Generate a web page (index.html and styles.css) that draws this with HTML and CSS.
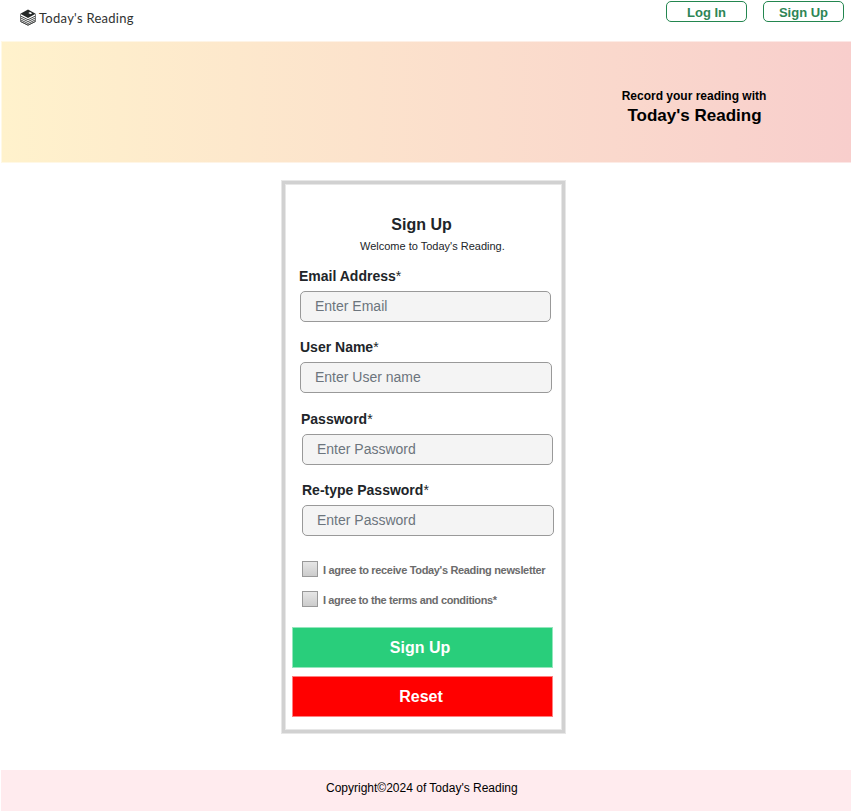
FILE: index.html
```html
<!DOCTYPE html>
<html lang="en">
<head>
<meta charset="utf-8">
<title>Today's Reading</title>
<link rel="stylesheet" href="styles.css">
</head>
<body>
<header class="header">
  <a class="brand">
    <svg class="logo" width="16" height="17" viewBox="0 0 16 17">
      <path d="M.3 4.7 8 .6l7.7 4.1L8 9z" fill="#252827"/>
      <path d="M8.3 4 10 3.1l2.2 1.2-1.7.9zM1 6 7.6 9.3v1L1 7z" fill="#fff"/>
      <path d="M.5 5v7.4L8 16.2l7.5-3.8V5" fill="none" stroke="#353837" stroke-width=".6"/>
      <path d="M.5 7 8 10.7 15.5 7M.5 8.9 8 12.6l7.5-3.7M.5 10.8 8 14.5l7.5-3.7M.5 12.5 8 16.2l7.5-3.7" fill="none" stroke="#353837" stroke-width=".9"/>
    </svg>
    <span class="brand-name">Today's Reading</span>
  </a>
  <nav class="nav">
    <a class="nav-button">Log In</a>
    <a class="nav-button">Sign Up</a>
  </nav>
</header>
<section class="banner">
  <div class="tagline">
    <p class="tagline-small">Record your reading with</p>
    <p class="tagline-large">Today's Reading</p>
  </div>
</section>
<main class="card">
  <h1 class="title">Sign Up</h1>
  <p class="welcome">Welcome to Today's Reading.</p>
  <div class="field email">
    <label class="label"><b>Email Address</b>*</label>
    <div class="input">Enter Email</div>
  </div>
  <div class="field user">
    <label class="label"><b>User Name</b>*</label>
    <div class="input wide">Enter User name</div>
  </div>
  <div class="field password">
    <label class="label"><b>Password</b>*</label>
    <div class="input">Enter Password</div>
  </div>
  <div class="field retype">
    <label class="label"><b>Re-type Password</b>*</label>
    <div class="input wide">Enter Password</div>
  </div>
  <div class="checks">
    <label class="check"><span class="box"></span><span>I agree to receive Today's Reading newsletter</span></label>
    <label class="check terms"><span class="box"></span><span>I agree to the terms and conditions*</span></label>
  </div>
  <div class="actions">
    <div class="button submit">Sign Up</div>
    <div class="button reset">Reset</div>
  </div>
</main>
<footer class="footer">Copyright©2024 of Today's Reading</footer>
</body>
</html>
```
FILE: styles.css
```css
* { box-sizing: border-box; }
body {
  margin: 0;
  height: 811px;
  overflow: hidden;
  background: #fff;
  color: #212529;
  font-family: "Liberation Sans", Arial, sans-serif;
}
p, h1 { margin: 0; }
.header {
  display: flex;
  justify-content: space-between;
  height: 41px;
  padding: 1px 7px 0 20px;
}
.brand { display: flex; height: 34px; padding-top: 8px; gap: 3px; }
.logo { display: block; flex: none; }
.brand-name {
  font: 13px/18px Lato, sans-serif;
  letter-spacing: .27px;
  color: #303332;
  white-space: nowrap;
}
.nav { display: flex; gap: 16px; }
.nav-button {
  width: 81px;
  height: 21px;
  border: 1px solid #23864f;
  border-radius: 5px;
  color: #2e8555;
  font-size: 13px;
  font-weight: bold;
  line-height: 21px;
  text-align: center;
}
.banner {
  height: 122px;
  margin-left: 1px;
  border: solid rgba(255, 255, 255, .5);
  border-width: 1px 0 1px 1px;
  background: linear-gradient(90deg, #fff2cc, #f8cecc) border-box;
}
.tagline {
  width: 146px;
  margin: 45px 0 0 619px;
  color: #000;
  font-weight: bold;
  text-align: center;
  white-space: nowrap;
}
.tagline-small { font-size: 12px; line-height: 18px; }
.tagline-large { padding-left: 1px; font-size: 17px; line-height: 22px; }
.card {
  width: 285px;
  height: 554px;
  margin: 17px 0 0 281px;
  padding: 33px 0 0 10px;
  border: 1px solid #e7e7e7;
  box-shadow: inset 0 0 0 3px #d1d1d1, inset 0 0 0 4px #e7e7e7;
}
.title { width: 259px; font-size: 16px; line-height: 22px; text-align: center; }
.welcome { padding-left: 68px; font-size: 11px; line-height: 20px; white-space: nowrap; }
.field { height: 71px; padding: 7px 0 0 8px; }
.email { height: 74px; padding-top: 10px; }
.user { height: 72px; }
.password, .retype { padding-left: 10px; }
.label { display: block; height: 25px; font-size: 14px; line-height: 20px; white-space: nowrap; }
.email .label, .password .label { margin-left: -1px; }
.input {
  width: 251px;
  height: 31px;
  padding-left: 14px;
  border: 1px solid #999;
  border-radius: 5px;
  background: #f4f4f4;
  color: #6c757d;
  font-size: 14px;
  line-height: 29px;
}
.input.wide { width: 252px; }
.checks { padding: 17px 0 0 10px; }
.check {
  display: flex;
  gap: 5px;
  height: 16px;
  margin-bottom: 14px;
  color: #6b6b6b;
  font-size: 11px;
  font-weight: bold;
  letter-spacing: -.33px;
  line-height: 18px;
  white-space: nowrap;
}
.terms { letter-spacing: -.37px; }
.box {
  width: 16px;
  height: 16px;
  border: 1px solid #999;
  background: linear-gradient(#e6e6e6, #ccc);
}
.actions { display: grid; gap: 8px; width: 261px; margin-top: 20px; }
.button {
  height: 41px;
  border: 1px solid rgba(255, 255, 255, .5);
  color: #fff;
  font-size: 16px;
  font-weight: bold;
  line-height: 39px;
  text-align: center;
}
.submit { background: #29ce7b; padding-right: 5px; }
.reset { background: #f00; padding-right: 3px; }
.footer {
  height: 41px;
  margin: 36px 0 0 1px;
  padding-left: 325px;
  background: #ffebee;
  color: #000;
  font-size: 12px;
  line-height: 36px;
}
```
